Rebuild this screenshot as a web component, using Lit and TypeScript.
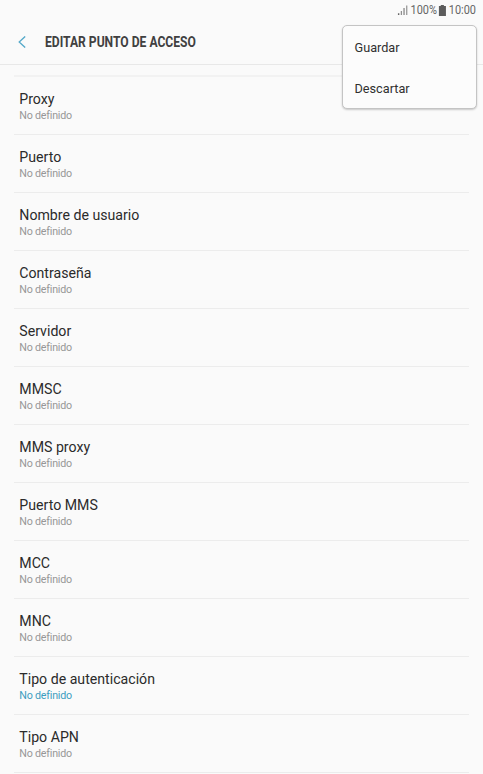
import { LitElement, html, css } from "lit";
import { customElement, property } from "lit/decorators.js";
import { classMap } from "lit/directives/class-map.js";

@customElement("status-bar")
class StatusBar extends LitElement {
  static styles = css`
    :host { display: block; height: 20px; padding-right: 7px; box-sizing: border-box; color: #666; font-size: 12px; line-height: 21px; }
    .bar { display: flex; height: 20px; justify-content: flex-end; align-items: center; transform: scaleX(0.91); transform-origin: right; }
    .signal { width: 11px; height: 10px; margin-right: 3px; }
    .battery { width: 8px; height: 11px; margin: 0 3px 0 2px; }
    svg { display: block; }
  `;
  render() {
    return html`
      <div class="bar">
        <svg class="signal" viewBox="0 0 10 10" preserveAspectRatio="none">
          <path d="M0 8.3h1.6v1.7H0z" fill="#666" />
          <path d="M3 6h1.3v4H3zM5.6 3h1.4v7H5.6zM8.4 0.4h1.3v9.6H8.4z" fill="#909090" />
        </svg>
        <span>100%</span>
        <svg class="battery" viewBox="0 0 7 11" preserveAspectRatio="none"><path d="M2 0h3v1h2v10H0V1h2z" fill="#5c5c5c" /></svg>
        <span>10:00</span>
      </div>
    `;
  }
}

@customElement("setting-row")
class SettingRow extends LitElement {
  @property() label = "";
  @property() value = "No definido";
  @property({ type: Boolean }) accent = false;
  static styles = css`
    :host { display: block; height: 58px; box-sizing: border-box; border-bottom: 1px solid #ececec; padding: 13px 0 0 5.3px; }
    .label { font-size: 14.15px; line-height: 19px; color: #2b2b2b; }
    .value { font-size: 10.7px; line-height: 13px; letter-spacing: -0.22px; color: #979797; }
    .accent { color: #3d9dc0; }
  `;
  render() {
    return html`
      <div class="label">${this.label}</div>
      <div class=${classMap({ value: true, accent: this.accent })}>${this.value}</div>
    `;
  }
}

@customElement("app-root")
class AppRoot extends LitElement {
  static styles = css`
    :host { display: block; position: relative; height: 774px; overflow: hidden; background: #fafafa; font-family: Roboto, "Liberation Sans", sans-serif; }
    header { display: flex; align-items: center; height: 45px; box-sizing: border-box; padding: 0 0 1px 18px; border-bottom: 1px solid #e8e8e8; }
    .back { width: 8px; height: 12px; margin-right: 19px; }
    h1 { margin: 0; font-size: 14px; line-height: 20px; font-weight: 700; color: #404040; white-space: nowrap; transform: scaleX(0.865); transform-origin: left; }
    .list { margin: 10px 14px 0 14px; border-top: 2px solid #f2f2f2; }
    .menu { position: absolute; left: 342px; top: 25px; width: 135px; height: 84px; box-sizing: border-box; border: 1px solid #c4c4c4; border-radius: 5px; background: #fcfcfc; box-shadow: 0 1px 2px rgba(0, 0, 0, 0.2); }
    .item { height: 41px; line-height: 43px; padding-left: 11.5px; font-size: 12.7px; color: #303030; }
  `;
  private rows = ["Proxy", "Puerto", "Nombre de usuario", "Contraseña", "Servidor", "MMSC", "MMS proxy", "Puerto MMS", "MCC", "MNC", "Tipo de autenticación", "Tipo APN"];
  render() {
    return html`
      <status-bar></status-bar>
      <header>
        <svg class="back" viewBox="0 0 8 12"><path d="M7.2 .4L1.2 6l6 5.6" fill="none" stroke="#55a9c9" stroke-width="1.3" /></svg>
        <h1>EDITAR PUNTO DE ACCESO</h1>
      </header>
      <div class="list">
        ${this.rows.map((r) => html`<setting-row .label=${r} .accent=${r === "Tipo de autenticación"}></setting-row>`)}
      </div>
      <div class="menu">
        <div class="item">Guardar</div>
        <div class="item">Descartar</div>
      </div>
    `;
  }
}
